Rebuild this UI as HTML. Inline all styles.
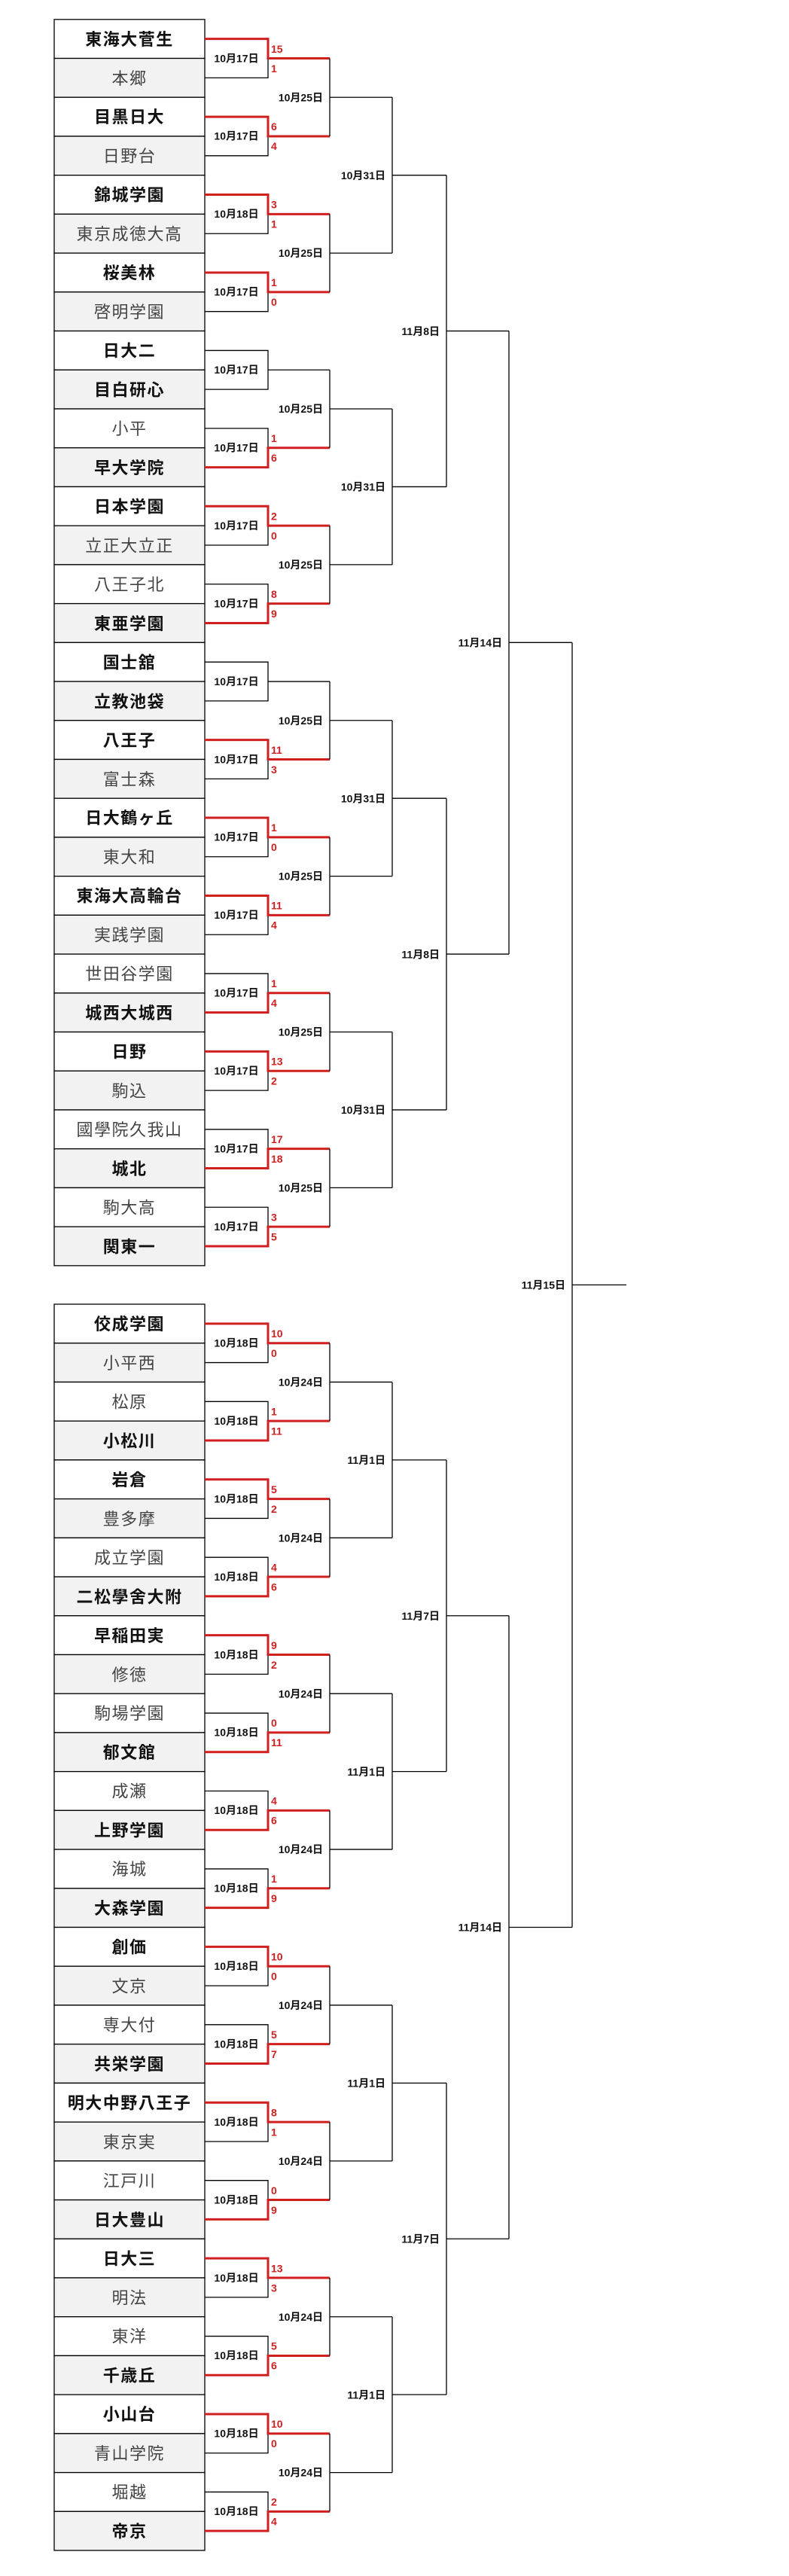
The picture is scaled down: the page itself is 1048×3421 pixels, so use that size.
<!DOCTYPE html>
<html><head><meta charset="utf-8"><style>
html,body{margin:0;padding:0;background:#fff;}
svg{display:block;}
.w{fill:#fff;stroke:#000;stroke-width:1.3}
.g{fill:#f2f2f2;stroke:#000;stroke-width:1.3}
text{font-family:"Liberation Sans","Noto Sans CJK JP",sans-serif;}
.b{font-size:22px;font-weight:bold;fill:#111;text-anchor:middle;letter-spacing:1.5px}
.n{font-size:22px;fill:#444;text-anchor:middle;letter-spacing:1.5px}
.d{font-size:14px;font-weight:bold;fill:#111;text-anchor:middle}
.e{font-size:14px;font-weight:bold;fill:#111;text-anchor:end}
.s{font-size:14px;font-weight:bold;fill:#d01f1f}
.k{fill:none;stroke:#000;stroke-width:1.3}
.r{fill:none;stroke:#d01f1f;stroke-width:3}
</style></head><body>
<svg width="1048" height="3421" viewBox="0 0 1048 3421" xmlns="http://www.w3.org/2000/svg">

<!-- ===== TOP HALF ===== -->
<g transform="translate(0,25.8)"><rect x="72" y="0" width="200" height="51.72" class="w"/><rect x="72" y="51.72" width="200" height="51.72" class="g"/><text x="172" y="34" class="b">東海大菅生</text><text x="172" y="86" class="n">本郷</text><path class="k" d="M272,77.58H356V51.72"/><path class="r" d="M272,25.86H356V51.72H438"/><text x="314" y="56.5" class="d">10月17日</text><text x="360" y="44" class="s">15</text><text x="360" y="70" class="s">1</text></g>
<g transform="translate(0,129.24)"><rect x="72" y="0" width="200" height="51.72" class="w"/><rect x="72" y="51.72" width="200" height="51.72" class="g"/><text x="172" y="34" class="b">目黒日大</text><text x="172" y="86" class="n">日野台</text><path class="k" d="M272,77.58H356V51.72"/><path class="r" d="M272,25.86H356V51.72H438"/><text x="314" y="56.5" class="d">10月17日</text><text x="360" y="44" class="s">6</text><text x="360" y="70" class="s">4</text></g>
<g transform="translate(0,232.68)"><rect x="72" y="0" width="200" height="51.72" class="w"/><rect x="72" y="51.72" width="200" height="51.72" class="g"/><text x="172" y="34" class="b">錦城学園</text><text x="172" y="86" class="n">東京成徳大高</text><path class="k" d="M272,77.58H356V51.72"/><path class="r" d="M272,25.86H356V51.72H438"/><text x="314" y="56.5" class="d">10月18日</text><text x="360" y="44" class="s">3</text><text x="360" y="70" class="s">1</text></g>
<g transform="translate(0,336.12)"><rect x="72" y="0" width="200" height="51.72" class="w"/><rect x="72" y="51.72" width="200" height="51.72" class="g"/><text x="172" y="34" class="b">桜美林</text><text x="172" y="86" class="n">啓明学園</text><path class="k" d="M272,77.58H356V51.72"/><path class="r" d="M272,25.86H356V51.72H438"/><text x="314" y="56.5" class="d">10月17日</text><text x="360" y="44" class="s">1</text><text x="360" y="70" class="s">0</text></g>
<g transform="translate(0,439.56)"><rect x="72" y="0" width="200" height="51.72" class="w"/><rect x="72" y="51.72" width="200" height="51.72" class="g"/><text x="172" y="34" class="b">日大二</text><text x="172" y="86" class="b">目白研心</text><path class="k" d="M272,25.86H356V77.58H272M356,51.72H438"/><text x="314" y="56.5" class="d">10月17日</text></g>
<g transform="translate(0,543)"><rect x="72" y="0" width="200" height="51.72" class="w"/><rect x="72" y="51.72" width="200" height="51.72" class="g"/><text x="172" y="34" class="n">小平</text><text x="172" y="86" class="b">早大学院</text><path class="k" d="M272,25.86H356V51.72"/><path class="r" d="M272,77.58H356V51.72H438"/><text x="314" y="56.5" class="d">10月17日</text><text x="360" y="44" class="s">1</text><text x="360" y="70" class="s">6</text></g>
<g transform="translate(0,646.44)"><rect x="72" y="0" width="200" height="51.72" class="w"/><rect x="72" y="51.72" width="200" height="51.72" class="g"/><text x="172" y="34" class="b">日本学園</text><text x="172" y="86" class="n">立正大立正</text><path class="k" d="M272,77.58H356V51.72"/><path class="r" d="M272,25.86H356V51.72H438"/><text x="314" y="56.5" class="d">10月17日</text><text x="360" y="44" class="s">2</text><text x="360" y="70" class="s">0</text></g>
<g transform="translate(0,749.88)"><rect x="72" y="0" width="200" height="51.72" class="w"/><rect x="72" y="51.72" width="200" height="51.72" class="g"/><text x="172" y="34" class="n">八王子北</text><text x="172" y="86" class="b">東亜学園</text><path class="k" d="M272,25.86H356V51.72"/><path class="r" d="M272,77.58H356V51.72H438"/><text x="314" y="56.5" class="d">10月17日</text><text x="360" y="44" class="s">8</text><text x="360" y="70" class="s">9</text></g>
<g transform="translate(0,853.32)"><rect x="72" y="0" width="200" height="51.72" class="w"/><rect x="72" y="51.72" width="200" height="51.72" class="g"/><text x="172" y="34" class="b">国士舘</text><text x="172" y="86" class="b">立教池袋</text><path class="k" d="M272,25.86H356V77.58H272M356,51.72H438"/><text x="314" y="56.5" class="d">10月17日</text></g>
<g transform="translate(0,956.76)"><rect x="72" y="0" width="200" height="51.72" class="w"/><rect x="72" y="51.72" width="200" height="51.72" class="g"/><text x="172" y="34" class="b">八王子</text><text x="172" y="86" class="n">富士森</text><path class="k" d="M272,77.58H356V51.72"/><path class="r" d="M272,25.86H356V51.72H438"/><text x="314" y="56.5" class="d">10月17日</text><text x="360" y="44" class="s">11</text><text x="360" y="70" class="s">3</text></g>
<g transform="translate(0,1060.2)"><rect x="72" y="0" width="200" height="51.72" class="w"/><rect x="72" y="51.72" width="200" height="51.72" class="g"/><text x="172" y="34" class="b">日大鶴ヶ丘</text><text x="172" y="86" class="n">東大和</text><path class="k" d="M272,77.58H356V51.72"/><path class="r" d="M272,25.86H356V51.72H438"/><text x="314" y="56.5" class="d">10月17日</text><text x="360" y="44" class="s">1</text><text x="360" y="70" class="s">0</text></g>
<g transform="translate(0,1163.64)"><rect x="72" y="0" width="200" height="51.72" class="w"/><rect x="72" y="51.72" width="200" height="51.72" class="g"/><text x="172" y="34" class="b">東海大高輪台</text><text x="172" y="86" class="n">実践学園</text><path class="k" d="M272,77.58H356V51.72"/><path class="r" d="M272,25.86H356V51.72H438"/><text x="314" y="56.5" class="d">10月17日</text><text x="360" y="44" class="s">11</text><text x="360" y="70" class="s">4</text></g>
<g transform="translate(0,1267.08)"><rect x="72" y="0" width="200" height="51.72" class="w"/><rect x="72" y="51.72" width="200" height="51.72" class="g"/><text x="172" y="34" class="n">世田谷学園</text><text x="172" y="86" class="b">城西大城西</text><path class="k" d="M272,25.86H356V51.72"/><path class="r" d="M272,77.58H356V51.72H438"/><text x="314" y="56.5" class="d">10月17日</text><text x="360" y="44" class="s">1</text><text x="360" y="70" class="s">4</text></g>
<g transform="translate(0,1370.52)"><rect x="72" y="0" width="200" height="51.72" class="w"/><rect x="72" y="51.72" width="200" height="51.72" class="g"/><text x="172" y="34" class="b">日野</text><text x="172" y="86" class="n">駒込</text><path class="k" d="M272,77.58H356V51.72"/><path class="r" d="M272,25.86H356V51.72H438"/><text x="314" y="56.5" class="d">10月17日</text><text x="360" y="44" class="s">13</text><text x="360" y="70" class="s">2</text></g>
<g transform="translate(0,1473.96)"><rect x="72" y="0" width="200" height="51.72" class="w"/><rect x="72" y="51.72" width="200" height="51.72" class="g"/><text x="172" y="34" class="n">國學院久我山</text><text x="172" y="86" class="b">城北</text><path class="k" d="M272,25.86H356V51.72"/><path class="r" d="M272,77.58H356V51.72H438"/><text x="314" y="56.5" class="d">10月17日</text><text x="360" y="44" class="s">17</text><text x="360" y="70" class="s">18</text></g>
<g transform="translate(0,1577.4)"><rect x="72" y="0" width="200" height="51.72" class="w"/><rect x="72" y="51.72" width="200" height="51.72" class="g"/><text x="172" y="34" class="n">駒大高</text><text x="172" y="86" class="b">関東一</text><path class="k" d="M272,25.86H356V51.72"/><path class="r" d="M272,77.58H356V51.72H438"/><text x="314" y="56.5" class="d">10月17日</text><text x="360" y="44" class="s">3</text><text x="360" y="70" class="s">5</text></g>

<!-- round 2 top -->
<g transform="translate(0,25.8)"><path class="k" d="M438,51.72V155.16M438,103.44H521"/><text x="429" y="108.5" class="e">10月25日</text></g>
<g transform="translate(0,232.68)"><path class="k" d="M438,51.72V155.16M438,103.44H521"/><text x="429" y="108.5" class="e">10月25日</text></g>
<g transform="translate(0,439.56)"><path class="k" d="M438,51.72V155.16M438,103.44H521"/><text x="429" y="108.5" class="e">10月25日</text></g>
<g transform="translate(0,646.44)"><path class="k" d="M438,51.72V155.16M438,103.44H521"/><text x="429" y="108.5" class="e">10月25日</text></g>
<g transform="translate(0,853.32)"><path class="k" d="M438,51.72V155.16M438,103.44H521"/><text x="429" y="108.5" class="e">10月25日</text></g>
<g transform="translate(0,1060.2)"><path class="k" d="M438,51.72V155.16M438,103.44H521"/><text x="429" y="108.5" class="e">10月25日</text></g>
<g transform="translate(0,1267.08)"><path class="k" d="M438,51.72V155.16M438,103.44H521"/><text x="429" y="108.5" class="e">10月25日</text></g>
<g transform="translate(0,1473.96)"><path class="k" d="M438,51.72V155.16M438,103.44H521"/><text x="429" y="108.5" class="e">10月25日</text></g>
<!-- round 3 top -->
<g transform="translate(0,25.8)"><path class="k" d="M521,103.44V310.32M521,206.88H593"/><text x="512" y="212" class="e">10月31日</text></g>
<g transform="translate(0,439.56)"><path class="k" d="M521,103.44V310.32M521,206.88H593"/><text x="512" y="212" class="e">10月31日</text></g>
<g transform="translate(0,853.32)"><path class="k" d="M521,103.44V310.32M521,206.88H593"/><text x="512" y="212" class="e">10月31日</text></g>
<g transform="translate(0,1267.08)"><path class="k" d="M521,103.44V310.32M521,206.88H593"/><text x="512" y="212" class="e">10月31日</text></g>
<!-- round 4 top -->
<g transform="translate(0,25.8)"><path class="k" d="M593,206.88V620.64M593,413.76H676"/><text x="584" y="419" class="e">11月8日</text></g>
<g transform="translate(0,853.32)"><path class="k" d="M593,206.88V620.64M593,413.76H676"/><text x="584" y="419" class="e">11月8日</text></g>
<!-- round 5 top -->
<g transform="translate(0,25.8)"><path class="k" d="M676,413.76V1241.28M676,827.52H760"/><text x="667" y="832.5" class="e">11月14日</text></g>

<!-- final -->
<path class="k" d="M760,853.32V2559.52M760,1706.4H832"/><text x="751" y="1711.5" class="e">11月15日</text>

<!-- ===== BOTTOM HALF ===== -->
<g transform="translate(0,1732)"><rect x="72" y="0" width="200" height="51.72" class="w"/><rect x="72" y="51.72" width="200" height="51.72" class="g"/><text x="172" y="34" class="b">佼成学園</text><text x="172" y="86" class="n">小平西</text><path class="k" d="M272,77.58H356V51.72"/><path class="r" d="M272,25.86H356V51.72H438"/><text x="314" y="56.5" class="d">10月18日</text><text x="360" y="44" class="s">10</text><text x="360" y="70" class="s">0</text></g>
<g transform="translate(0,1835.44)"><rect x="72" y="0" width="200" height="51.72" class="w"/><rect x="72" y="51.72" width="200" height="51.72" class="g"/><text x="172" y="34" class="n">松原</text><text x="172" y="86" class="b">小松川</text><path class="k" d="M272,25.86H356V51.72"/><path class="r" d="M272,77.58H356V51.72H438"/><text x="314" y="56.5" class="d">10月18日</text><text x="360" y="44" class="s">1</text><text x="360" y="70" class="s">11</text></g>
<g transform="translate(0,1938.88)"><rect x="72" y="0" width="200" height="51.72" class="w"/><rect x="72" y="51.72" width="200" height="51.72" class="g"/><text x="172" y="34" class="b">岩倉</text><text x="172" y="86" class="n">豊多摩</text><path class="k" d="M272,77.58H356V51.72"/><path class="r" d="M272,25.86H356V51.72H438"/><text x="314" y="56.5" class="d">10月18日</text><text x="360" y="44" class="s">5</text><text x="360" y="70" class="s">2</text></g>
<g transform="translate(0,2042.32)"><rect x="72" y="0" width="200" height="51.72" class="w"/><rect x="72" y="51.72" width="200" height="51.72" class="g"/><text x="172" y="34" class="n">成立学園</text><text x="172" y="86" class="b">二松學舍大附</text><path class="k" d="M272,25.86H356V51.72"/><path class="r" d="M272,77.58H356V51.72H438"/><text x="314" y="56.5" class="d">10月18日</text><text x="360" y="44" class="s">4</text><text x="360" y="70" class="s">6</text></g>
<g transform="translate(0,2145.76)"><rect x="72" y="0" width="200" height="51.72" class="w"/><rect x="72" y="51.72" width="200" height="51.72" class="g"/><text x="172" y="34" class="b">早稲田実</text><text x="172" y="86" class="n">修徳</text><path class="k" d="M272,77.58H356V51.72"/><path class="r" d="M272,25.86H356V51.72H438"/><text x="314" y="56.5" class="d">10月18日</text><text x="360" y="44" class="s">9</text><text x="360" y="70" class="s">2</text></g>
<g transform="translate(0,2249.2)"><rect x="72" y="0" width="200" height="51.72" class="w"/><rect x="72" y="51.72" width="200" height="51.72" class="g"/><text x="172" y="34" class="n">駒場学園</text><text x="172" y="86" class="b">郁文館</text><path class="k" d="M272,25.86H356V51.72"/><path class="r" d="M272,77.58H356V51.72H438"/><text x="314" y="56.5" class="d">10月18日</text><text x="360" y="44" class="s">0</text><text x="360" y="70" class="s">11</text></g>
<g transform="translate(0,2352.64)"><rect x="72" y="0" width="200" height="51.72" class="w"/><rect x="72" y="51.72" width="200" height="51.72" class="g"/><text x="172" y="34" class="n">成瀬</text><text x="172" y="86" class="b">上野学園</text><path class="k" d="M272,25.86H356V51.72"/><path class="r" d="M272,77.58H356V51.72H438"/><text x="314" y="56.5" class="d">10月18日</text><text x="360" y="44" class="s">4</text><text x="360" y="70" class="s">6</text></g>
<g transform="translate(0,2456.08)"><rect x="72" y="0" width="200" height="51.72" class="w"/><rect x="72" y="51.72" width="200" height="51.72" class="g"/><text x="172" y="34" class="n">海城</text><text x="172" y="86" class="b">大森学園</text><path class="k" d="M272,25.86H356V51.72"/><path class="r" d="M272,77.58H356V51.72H438"/><text x="314" y="56.5" class="d">10月18日</text><text x="360" y="44" class="s">1</text><text x="360" y="70" class="s">9</text></g>
<g transform="translate(0,2559.52)"><rect x="72" y="0" width="200" height="51.72" class="w"/><rect x="72" y="51.72" width="200" height="51.72" class="g"/><text x="172" y="34" class="b">創価</text><text x="172" y="86" class="n">文京</text><path class="k" d="M272,77.58H356V51.72"/><path class="r" d="M272,25.86H356V51.72H438"/><text x="314" y="56.5" class="d">10月18日</text><text x="360" y="44" class="s">10</text><text x="360" y="70" class="s">0</text></g>
<g transform="translate(0,2662.96)"><rect x="72" y="0" width="200" height="51.72" class="w"/><rect x="72" y="51.72" width="200" height="51.72" class="g"/><text x="172" y="34" class="n">専大付</text><text x="172" y="86" class="b">共栄学園</text><path class="k" d="M272,25.86H356V51.72"/><path class="r" d="M272,77.58H356V51.72H438"/><text x="314" y="56.5" class="d">10月18日</text><text x="360" y="44" class="s">5</text><text x="360" y="70" class="s">7</text></g>
<g transform="translate(0,2766.4)"><rect x="72" y="0" width="200" height="51.72" class="w"/><rect x="72" y="51.72" width="200" height="51.72" class="g"/><text x="172" y="34" class="b">明大中野八王子</text><text x="172" y="86" class="n">東京実</text><path class="k" d="M272,77.58H356V51.72"/><path class="r" d="M272,25.86H356V51.72H438"/><text x="314" y="56.5" class="d">10月18日</text><text x="360" y="44" class="s">8</text><text x="360" y="70" class="s">1</text></g>
<g transform="translate(0,2869.84)"><rect x="72" y="0" width="200" height="51.72" class="w"/><rect x="72" y="51.72" width="200" height="51.72" class="g"/><text x="172" y="34" class="n">江戸川</text><text x="172" y="86" class="b">日大豊山</text><path class="k" d="M272,25.86H356V51.72"/><path class="r" d="M272,77.58H356V51.72H438"/><text x="314" y="56.5" class="d">10月18日</text><text x="360" y="44" class="s">0</text><text x="360" y="70" class="s">9</text></g>
<g transform="translate(0,2973.28)"><rect x="72" y="0" width="200" height="51.72" class="w"/><rect x="72" y="51.72" width="200" height="51.72" class="g"/><text x="172" y="34" class="b">日大三</text><text x="172" y="86" class="n">明法</text><path class="k" d="M272,77.58H356V51.72"/><path class="r" d="M272,25.86H356V51.72H438"/><text x="314" y="56.5" class="d">10月18日</text><text x="360" y="44" class="s">13</text><text x="360" y="70" class="s">3</text></g>
<g transform="translate(0,3076.72)"><rect x="72" y="0" width="200" height="51.72" class="w"/><rect x="72" y="51.72" width="200" height="51.72" class="g"/><text x="172" y="34" class="n">東洋</text><text x="172" y="86" class="b">千歳丘</text><path class="k" d="M272,25.86H356V51.72"/><path class="r" d="M272,77.58H356V51.72H438"/><text x="314" y="56.5" class="d">10月18日</text><text x="360" y="44" class="s">5</text><text x="360" y="70" class="s">6</text></g>
<g transform="translate(0,3180.16)"><rect x="72" y="0" width="200" height="51.72" class="w"/><rect x="72" y="51.72" width="200" height="51.72" class="g"/><text x="172" y="34" class="b">小山台</text><text x="172" y="86" class="n">青山学院</text><path class="k" d="M272,77.58H356V51.72"/><path class="r" d="M272,25.86H356V51.72H438"/><text x="314" y="56.5" class="d">10月18日</text><text x="360" y="44" class="s">10</text><text x="360" y="70" class="s">0</text></g>
<g transform="translate(0,3283.6)"><rect x="72" y="0" width="200" height="51.72" class="w"/><rect x="72" y="51.72" width="200" height="51.72" class="g"/><text x="172" y="34" class="n">堀越</text><text x="172" y="86" class="b">帝京</text><path class="k" d="M272,25.86H356V51.72"/><path class="r" d="M272,77.58H356V51.72H438"/><text x="314" y="56.5" class="d">10月18日</text><text x="360" y="44" class="s">2</text><text x="360" y="70" class="s">4</text></g>

<!-- round 2 bottom -->
<g transform="translate(0,1732)"><path class="k" d="M438,51.72V155.16M438,103.44H521"/><text x="429" y="108.5" class="e">10月24日</text></g>
<g transform="translate(0,1938.88)"><path class="k" d="M438,51.72V155.16M438,103.44H521"/><text x="429" y="108.5" class="e">10月24日</text></g>
<g transform="translate(0,2145.76)"><path class="k" d="M438,51.72V155.16M438,103.44H521"/><text x="429" y="108.5" class="e">10月24日</text></g>
<g transform="translate(0,2352.64)"><path class="k" d="M438,51.72V155.16M438,103.44H521"/><text x="429" y="108.5" class="e">10月24日</text></g>
<g transform="translate(0,2559.52)"><path class="k" d="M438,51.72V155.16M438,103.44H521"/><text x="429" y="108.5" class="e">10月24日</text></g>
<g transform="translate(0,2766.4)"><path class="k" d="M438,51.72V155.16M438,103.44H521"/><text x="429" y="108.5" class="e">10月24日</text></g>
<g transform="translate(0,2973.28)"><path class="k" d="M438,51.72V155.16M438,103.44H521"/><text x="429" y="108.5" class="e">10月24日</text></g>
<g transform="translate(0,3180.16)"><path class="k" d="M438,51.72V155.16M438,103.44H521"/><text x="429" y="108.5" class="e">10月24日</text></g>
<!-- round 3 bottom -->
<g transform="translate(0,1732)"><path class="k" d="M521,103.44V310.32M521,206.88H593"/><text x="512" y="212" class="e">11月1日</text></g>
<g transform="translate(0,2145.76)"><path class="k" d="M521,103.44V310.32M521,206.88H593"/><text x="512" y="212" class="e">11月1日</text></g>
<g transform="translate(0,2559.52)"><path class="k" d="M521,103.44V310.32M521,206.88H593"/><text x="512" y="212" class="e">11月1日</text></g>
<g transform="translate(0,2973.28)"><path class="k" d="M521,103.44V310.32M521,206.88H593"/><text x="512" y="212" class="e">11月1日</text></g>
<!-- round 4 bottom -->
<g transform="translate(0,1732)"><path class="k" d="M593,206.88V620.64M593,413.76H676"/><text x="584" y="419" class="e">11月7日</text></g>
<g transform="translate(0,2559.52)"><path class="k" d="M593,206.88V620.64M593,413.76H676"/><text x="584" y="419" class="e">11月7日</text></g>
<!-- round 5 bottom -->
<g transform="translate(0,1732)"><path class="k" d="M676,413.76V1241.28M676,827.52H760"/><text x="667" y="832.5" class="e">11月14日</text></g>

</svg>
</body></html>
